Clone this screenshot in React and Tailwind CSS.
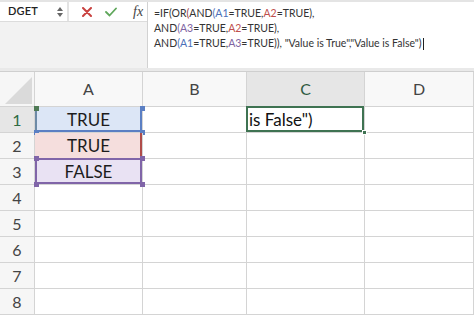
import React from 'react'

const A1 = 'text-[#4a6fb8]'
const A2 = 'text-[#c0504d]'
const A3 = 'text-[#8064a2]'

function Corner({ pos, color }) {
  return <span className={`absolute h-[5px] w-[5px] ${pos} ${color}`} />
}

export default function App() {
  const rows = [1, 2, 3, 4, 5, 6, 7, 8]
  const cols = ['A', 'B', 'C', 'D']

  return (
    <div className="h-[315px] w-[474px] overflow-hidden bg-white font-['Lato','Liberation_Sans',sans-serif] text-[#333]">
      {/* formula bar */}
      <div className="flex h-[68px] border-t-2 border-[#e4e4e4] bg-[#f2f2f2]">
        <div className="flex w-[147px] flex-col">
          <div className="flex h-[20px] bg-white border-b border-[#dcdcdc]">
            <div className="flex w-[67px] items-center justify-between pl-[8px] pr-[4px]">
              <span className="text-[11px] font-semibold tracking-[0.2px] text-[#222]">DGET</span>
              <span className="flex flex-col items-center gap-[2px]">
                <svg width="6" height="4" viewBox="0 0 6 4"><path d="M0 4 L3 0 L6 4 Z" fill="#666" /></svg>
                <svg width="6" height="4" viewBox="0 0 6 4"><path d="M0 0 L3 4 L6 0 Z" fill="#666" /></svg>
              </span>
            </div>
            <div className="w-[2px] bg-[#e3e3e3]" />
            <div className="flex flex-1 items-center pl-[13px] gap-[13px]">
              <svg width="10" height="10" viewBox="0 0 10 10">
                <path d="M1 1 L9 9 M9 1 L1 9" stroke="#c9413f" strokeWidth="2" strokeLinecap="round" />
              </svg>
              <svg width="12" height="10" viewBox="0 0 12 10">
                <path d="M1 5 L4.5 8.5 L11 1.5" stroke="#5fa75b" strokeWidth="1.8" fill="none" strokeLinecap="round" />
              </svg>
              <span className="ml-[3px] font-['Liberation_Serif',serif] text-[14px] italic text-[#444]">fx</span>
            </div>
          </div>
          <div className="flex-1" />
        </div>
        <div className="flex-1 border-l border-[#d2d2d2] bg-white pl-[6px] pt-[4px] text-[10.5px] leading-[15px] text-[#333]">
          <div>
            =IF(OR<span className="text-[#9b3b3b]">(</span>AND<span className={A1}>(A1</span>=TRUE,<span className={A2}>A2</span>=TRUE),
          </div>
          <div>
            AND<span className={A3}>(A3</span>=TRUE,<span className={A2}>A2</span>=TRUE),
          </div>
          <div className="flex items-center">
            <span>
              AND<span className={A1}>(A1</span>=TRUE,<span className={A3}>A3</span>=TRUE)), "Value is True","Value is False")
            </span>
            <span className="ml-[1px] inline-block h-[12px] w-[1px] bg-[#222]" />
          </div>
        </div>
      </div>
      <div className="h-[4px] border-b border-[#cfcfcf] bg-[#e9e9e9]" />

      {/* sheet grid */}
      <div className="grid grid-cols-[35px_108px_104px_118px_109px] grid-rows-[35px_repeat(8,26px)]">
        <div className="relative border-b border-r border-[#d4d4d4] bg-[#f6f6f6]">
          <svg className="absolute left-0 top-0" width="34" height="34" viewBox="0 0 34 34">
            <path d="M5 32 L32 5 L32 32 Z" fill="#dadada" />
          </svg>
        </div>
        {cols.map((c) => (
          <div
            key={c}
            className={`flex items-center justify-center border-b border-r border-[#d4d4d4] text-[16px] ${
              c === 'C' ? 'bg-[#e6e6e6] text-[#2f5a41]' : 'bg-[#f8f8f8] text-[#444]'
            }`}
          >
            {c}
          </div>
        ))}

        {rows.map((r) => (
          <React.Fragment key={r}>
            <div
              className={`flex items-center justify-center border-b border-r border-[#d4d4d4] text-[16px] ${
                r === 1 ? 'bg-[#e6e6e6] text-[#2e6b44]' : 'bg-[#f6f6f6] text-[#444]'
              }`}
            >
              {r}
            </div>

            {/* column A */}
            {r === 1 ? (
              <div className="relative flex items-center justify-center border-b border-r border-[#d4d4d4] bg-[#dce6f6] text-[17px] text-[#1c1c1c]">
                <span className="absolute inset-0 border-b-2 border-r-2 border-[#5b7fc3]" />
                <span className="absolute left-0 top-0 bottom-0 w-[2px] bg-[#6d8aa6]" />
                <Corner pos="-left-[1px] -top-[1px]" color="bg-[#4f7a55]" />
                <Corner pos="-right-[3px] -top-[1px]" color="bg-[#5b7fc3]" />
                <Corner pos="-left-[1px] -bottom-[3px]" color="bg-[#5b7fc3]" />
                <Corner pos="-right-[3px] -bottom-[3px]" color="bg-[#5b7fc3]" />
                TRUE
              </div>
            ) : r === 2 ? (
              <div className="relative flex items-center justify-center border-b border-r border-[#d4d4d4] bg-[#f5dedd] text-[17px] text-[#1c1c1c]">
                <span className="absolute inset-y-0 right-0 w-[2px] bg-[#b04c4a]" />
                TRUE
              </div>
            ) : r === 3 ? (
              <div className="relative flex items-center justify-center border-b border-r border-[#d4d4d4] bg-[#e9e2f3] text-[17px] text-[#1c1c1c]">
                <span className="absolute -top-[1px] left-0 right-0 bottom-0 border-2 border-[#8065a8]" />
                <Corner pos="-left-[1px] -top-[3px]" color="bg-[#8065a8]" />
                <Corner pos="-right-[3px] -top-[3px]" color="bg-[#8065a8]" />
                <Corner pos="-left-[1px] -bottom-[3px]" color="bg-[#8065a8]" />
                <Corner pos="-right-[3px] -bottom-[3px]" color="bg-[#8065a8]" />
                FALSE
              </div>
            ) : (
              <div className="border-b border-r border-[#d4d4d4]" />
            )}

            <div className="border-b border-r border-[#d4d4d4]" />

            {/* column C */}
            {r === 1 ? (
              <div className="relative flex items-center border-b border-r border-[#d4d4d4] pl-[2px] text-[17px] text-[#111]">
                <span className="absolute -left-[1px] -top-[1px] bottom-0 right-0 border-2 border-[#3f7352]" />
                <span className="absolute -bottom-[3px] -right-[3px] h-[5px] w-[5px] border border-white bg-[#3f7352]" />
                is False")
              </div>
            ) : (
              <div className="border-b border-r border-[#d4d4d4]" />
            )}

            <div className="border-b border-r border-[#d4d4d4]" />
          </React.Fragment>
        ))}
      </div>
    </div>
  )
}
